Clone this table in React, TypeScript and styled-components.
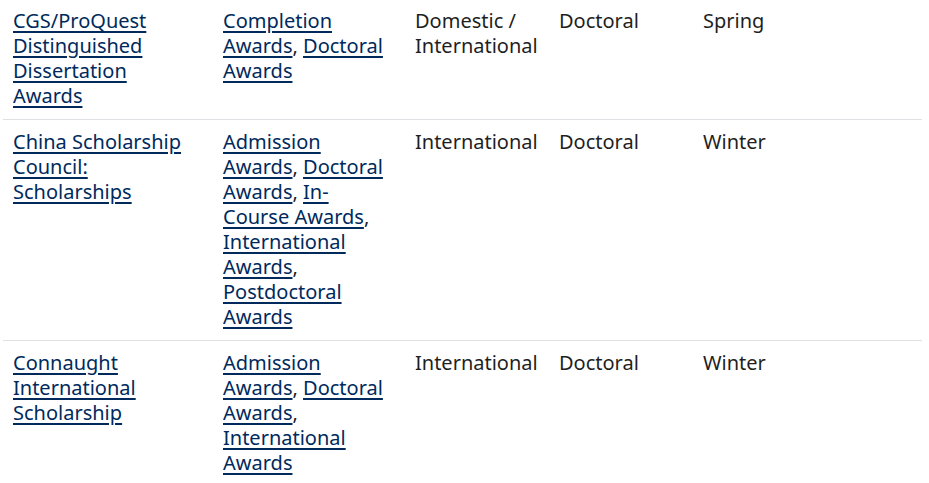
import React from 'react';
import styled, { createGlobalStyle } from 'styled-components';

const Global = createGlobalStyle`
  body {
    margin: 0;
    background: #fff;
    font-family: "Noto Sans", "Open Sans", sans-serif;
  }
`;

const Table = styled.table`
  border-collapse: collapse;
  margin: -1px 0 0 3px;
  width: 919px;
  table-layout: fixed;
  font-size: 20px;
  line-height: 25px;
  color: #1f1f1f;
`;

const Row = styled.tr`
  border-bottom: 1px solid #dfdfe4;
`;

// links columns wrap a little earlier than the plain ones
const Cell = styled.td<{ $w: number; $padRight?: number }>`
  width: ${(p) => p.$w}px;
  padding: 9px ${(p) => p.$padRight ?? 10}px 11px 10px;
  vertical-align: top;
  box-sizing: border-box;
`;

const Link = styled.a`
  color: #002a5c;
  text-decoration: underline;
  text-decoration-thickness: 2px;
  text-underline-offset: 3px;
`;

type Award = {
  name: string;
  types: string[];
  citizenship: string;
  level: string;
  term: string;
};

const awards: Award[] = [
  {
    name: 'CGS/ProQuest Distinguished Dissertation Awards',
    types: ['Completion Awards', 'Doctoral Awards'],
    citizenship: 'Domestic / International',
    level: 'Doctoral',
    term: 'Spring',
  },
  {
    name: 'China Scholarship Council: Scholarships',
    types: ['Admission Awards', 'Doctoral Awards', 'In-Course Awards', 'International Awards', 'Postdoctoral Awards'],
    citizenship: 'International',
    level: 'Doctoral',
    term: 'Winter',
  },
  {
    name: 'Connaught International Scholarship',
    types: ['Admission Awards', 'Doctoral Awards', 'International Awards'],
    citizenship: 'International',
    level: 'Doctoral',
    term: 'Winter',
  },
];

export default function App() {
  return (
    <>
      <Global />
      <Table>
        <tbody>
          {awards.map((a) => (
            <Row key={a.name}>
              <Cell $w={210} $padRight={17}>
                <Link href="#">{a.name}</Link>
              </Cell>
              <Cell $w={192} $padRight={17}>
                {a.types.map((t, i) => (
                  <React.Fragment key={t}>
                    <Link href="#">{t}</Link>
                    {i < a.types.length - 1 ? ', ' : ''}
                  </React.Fragment>
                ))}
              </Cell>
              <Cell $w={144}>{a.citizenship}</Cell>
              <Cell $w={144}>{a.level}</Cell>
              <Cell $w={229}>{a.term}</Cell>
            </Row>
          ))}
        </tbody>
      </Table>
    </>
  );
}
